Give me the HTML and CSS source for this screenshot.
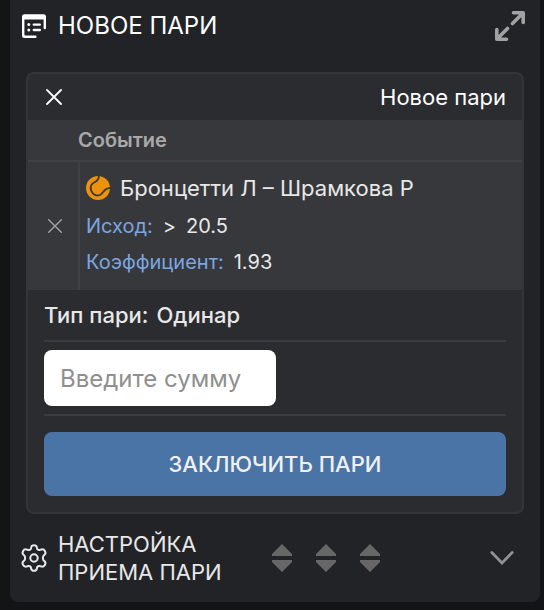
FILE: index.html
```html
<!DOCTYPE html>
<html lang="ru">
<head>
<meta charset="utf-8">
<meta name="viewport" content="width=device-width, initial-scale=1">
<title>Новое пари</title>
<link rel="stylesheet" href="styles.css">
</head>
<body>
<main class="panel">
  <header class="panel-head">
    <svg class="icon" viewBox="0 0 24 24" aria-hidden="true">
      <path d="M2.500 .2h19A2.500 2.500 0 0 1 24 2.700V14a1.200 1.200 0 0 1-2.400 0V5.500H2.400v15.100q0 1 1 1h10a1.200 1.200 0 0 1 0 2.400H2.500A2.500 2.500 0 0 1 0 21.500V2.700A2.500 2.500 0 0 1 2.500 .2z" fill="currentColor"/>
      <path d="M11.800 10.600h6M11.800 16h6" stroke="currentColor" stroke-width="2.400" stroke-linecap="round"/>
      <circle cx="6.800" cy="10.600" r="1.500" fill="currentColor"/>
      <circle cx="6.800" cy="16" r="1.500" fill="currentColor"/>
    </svg>
    <h1 class="panel-title">НОВОЕ ПАРИ</h1>
    <button class="icon-button expand" type="button" aria-label="Развернуть">
      <svg width="32" height="32" viewBox="0 0 32 32" fill="none" stroke="currentColor" stroke-width="3.600" stroke-linecap="round" stroke-linejoin="round" aria-hidden="true">
        <path d="M18.500 13.500 29 3M19.500 2.800h9.700v9.700M13.500 18.500 3 29M2.800 19.500v9.700h9.700"/>
      </svg>
    </button>
  </header>

  <section class="slip">
    <div class="slip-head">
      <button class="icon-button slip-close" type="button" aria-label="Закрыть">
        <svg width="16" height="16" viewBox="0 0 16 16" fill="none" stroke="currentColor" stroke-width="1.800" stroke-linecap="round" aria-hidden="true"><path d="m1 1 14 14M15 1 1 15"/></svg>
      </button>
      <h2 class="slip-title">Новое пари</h2>
    </div>

    <table class="events">
      <thead>
        <tr><th class="col-remove"></th><th class="col-event" scope="col">Событие</th></tr>
      </thead>
      <tbody>
        <tr>
          <td class="cell-remove">
            <button class="icon-button remove" type="button" aria-label="Удалить событие">
              <svg width="14" height="14" viewBox="0 0 14 14" fill="none" stroke="currentColor" stroke-width="1.400" stroke-linecap="round" aria-hidden="true"><path d="m.7.7 12.600 12.600M13.300.7.7 13.300"/></svg>
            </button>
          </td>
          <td class="cell-event">
            <p class="match">
              <svg class="ball" viewBox="0 0 24 24" aria-hidden="true">
                <circle cx="12" cy="12" r="12" fill="#ed920c"/>
                <path d="M12.800-.5C13.200 3.200 11.500 4.800 8.500 6.300 5 8.200 4 11.500 5.300 14.800 6.800 18.600 10.500 20.300 14 19 18.200 17.300 17.200 12 24.500 11.800" fill="none" stroke="#37383c" stroke-width="1.800"/>
              </svg>
              <span>Бронцетти Л – Шрамкова Р</span>
            </p>
            <p class="detail"><span class="label">Исход:</span><span>&gt;</span><span>20.5</span></p>
            <p class="detail"><span class="label">Коэффициент:</span><span>1.93</span></p>
          </td>
        </tr>
      </tbody>
    </table>

    <form class="bet">
      <p class="bet-type"><span>Тип пари:</span><span>Одинар</span></p>
      <div class="stake">
        <input class="stake-input" type="text" inputmode="decimal" placeholder="Введите сумму" aria-label="Сумма пари">
      </div>
      <button class="submit" type="button">ЗАКЛЮЧИТЬ ПАРИ</button>
    </form>
  </section>

  <footer class="settings">
    <svg class="gear" viewBox="0 0 26 28" fill="none" stroke="currentColor" stroke-width="2" stroke-linejoin="round" aria-hidden="true">
      <path d="M10.200 3.200Q10.600 1.200 13 1.200T15.800 3.200L16.300 5.200Q17.200 6.200 18.600 6L20.800 5.400Q22.800 5 24 7.200T23.600 10.600L22.200 12.200Q21.600 14 22.200 15.800L23.600 17.400Q25.100 18.600 24 20.800T20.800 22.600L18.600 22Q17.200 21.800 16.300 22.800L15.800 24.800Q15.400 26.800 13 26.800T10.200 24.800L9.700 22.800Q8.800 21.800 7.400 22L5.200 22.600Q3.200 23 2 20.800T2.400 17.400L3.800 15.800Q4.400 14 3.800 12.200L2.400 10.600Q.9 9.400 2 7.200T5.200 5.400L7.400 6Q8.800 6.200 9.700 5.200z"/>
      <circle cx="13" cy="14" r="3.700"/>
    </svg>
    <h2 class="settings-title">НАСТРОЙКА ПРИЕМА ПАРИ</h2>
    <div class="sorters">
      <svg class="sorter" viewBox="0 0 20 28" aria-hidden="true"><path d="M10 0 20 10v2H0v-2zM0 16h20v2L10 28 0 18z"/></svg>
      <svg class="sorter" viewBox="0 0 20 28" aria-hidden="true"><path d="M10 0 20 10v2H0v-2zM0 16h20v2L10 28 0 18z"/></svg>
      <svg class="sorter" viewBox="0 0 20 28" aria-hidden="true"><path d="M10 0 20 10v2H0v-2zM0 16h20v2L10 28 0 18z"/></svg>
    </div>
    <button class="icon-button toggle" type="button" aria-label="Показать настройки">
      <svg width="24" height="14" viewBox="0 0 24 14" fill="none" stroke="currentColor" stroke-width="2.800" stroke-linecap="round" aria-hidden="true"><path d="m1.800 1.500 10.200 10.500L22.200 1.500"/></svg>
    </button>
  </footer>
</main>
</body>
</html>
```
FILE: styles.css
```css
* {
  box-sizing: border-box;
}

body {
  margin: 0;
  padding: 0 4px 8px 10px;
  background: #131416;
  color: #e8e8e8;
  font-family: Inter, "Liberation Sans", sans-serif;
  font-size: 20px;
  line-height: 28px;
}

h1,
h2,
p {
  margin: 0;
  font-weight: 400;
}

svg {
  display: block;
  flex: none;
}

button,
input {
  font: inherit;
}

.icon-button {
  padding: 0;
  border: 0;
  background: none;
  color: inherit;
  cursor: pointer;
}

.panel {
  padding: 8px 0;
  border-radius: 0 0 8px 8px;
  background: #222326;
}

.panel-head {
  display: flex;
  align-items: center;
  gap: 12px;
  height: 36px;
  padding: 0 14px 0 12px;
  color: #fff;
}

.icon {
  width: 24px;
  height: 24px;
}

.panel-title {
  flex: 1;
  font-size: 24px;
}

.expand {
  color: #a2a2a2;
}

.slip {
  margin: 28px 16px 0;
  border: 2px solid #343539;
  border-radius: 8px;
  background: #2b2c30;
}

.slip-head {
  display: flex;
  align-items: center;
  justify-content: space-between;
  height: 46px;
  padding: 0 16px 0 18px;
  color: #fff;
}

.slip-title {
  font-size: 22px;
}

.events {
  width: 100%;
  border-spacing: 0;
  background: #37383c;
}

.events th {
  height: 42px;
  padding: 0;
  border-bottom: 2px solid #404145;
  color: #a9a9a9;
  font-weight: 600;
  text-align: left;
}

.col-remove {
  width: 50px;
}

.cell-remove {
  padding: 0;
}

.remove {
  display: block;
  margin: 0 auto 0 20px;
  color: #a2a2a2;
}

.cell-event {
  padding: 12px 6px 14px;
  border-left: 2px solid #404145;
}

.match {
  display: flex;
  align-items: center;
  gap: 10px;
  margin-bottom: 10px;
  font-size: 22px;
}

.ball {
  width: 24px;
  height: 24px;
}

.detail {
  display: flex;
  gap: 10px;
}

.detail + .detail {
  margin-top: 8px;
}

.label {
  color: #7ba6e0;
}

.bet {
  padding: 0 16px 16px;
}

.bet-type {
  display: flex;
  align-items: center;
  gap: 8px;
  height: 50px;
  font-size: 22px;
  font-weight: 500;
}

.stake {
  padding: 8px 0;
  border: solid #3a3b3f;
  border-width: 2px 0;
}

.stake-input {
  display: block;
  width: 232px;
  max-width: 100%;
  height: 56px;
  padding: 0 16px;
  border: 0;
  border-radius: 8px;
  background: #fff;
  color: #222326;
  font-size: 24px;
}

.stake-input::placeholder {
  color: #8f8f8f;
  opacity: 1;
}

.submit {
  display: block;
  width: 100%;
  height: 64px;
  margin-top: 16px;
  border: 0;
  border-radius: 8px;
  background: #4a74a6;
  color: #f0f0f0;
  font-size: 22px;
  font-weight: 500;
  cursor: pointer;
}

.settings {
  display: flex;
  align-items: center;
  padding: 16px 26px 8px 11px;
}

.gear {
  width: 26px;
  height: 28px;
  margin-right: 11px;
}

.settings-title {
  flex: 0 1 214px;
  padding-right: 40px;
  font-size: 22px;
}

.sorters {
  display: flex;
  gap: 24px;
}

.sorter {
  width: 20px;
  height: 28px;
  fill: #676767;
}

.toggle {
  margin-left: auto;
  color: #929294;
}
```
